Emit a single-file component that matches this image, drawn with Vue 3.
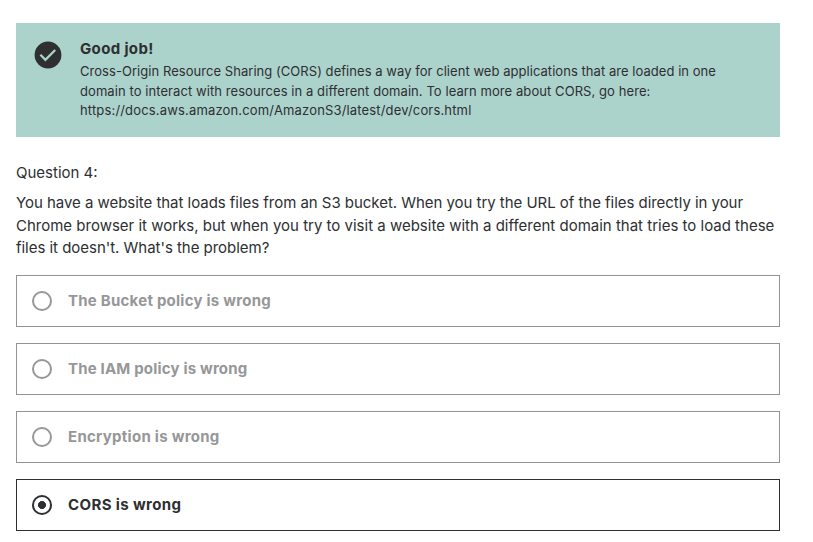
<script setup>
import { ref } from 'vue'

const explanation = [
  { text: 'Cross-Origin Resource Sharing (CORS) defines a way for client web applications that are loaded in one', spacing: 0.046 },
  { text: 'domain to interact with resources in a different domain. To learn more about CORS, go here:', spacing: 0.075 },
  { text: 'https://docs.aws.amazon.com/AmazonS3/latest/dev/cors.html', spacing: 0.163 },
]
const question = [
  { text: 'You have a website that loads files from an S3 bucket. When you try the URL of the files directly in your', spacing: -0.038 },
  { text: 'Chrome browser it works, but when you try to visit a website with a different domain that tries to load these', spacing: 0 },
  { text: "files it doesn't. What's the problem?", spacing: -0.03 },
]
const answers = [
  { text: 'The Bucket policy is wrong', spacing: 0.24 },
  { text: 'The IAM policy is wrong', spacing: 0.18 },
  { text: 'Encryption is wrong', spacing: 0.28 },
  { text: 'CORS is wrong', spacing: 0.38 },
]
const selected = ref(3)
</script>

<template>
  <main class="quiz">
    <section class="banner">
      <svg class="check" viewBox="0 0 28 28" aria-hidden="true">
        <circle cx="14" cy="14" r="13.4" fill="#2d2f31" />
        <path d="M6.4 13.8L11.4 18.8L21.2 9" fill="none" stroke="#acd2cc" stroke-width="2.3" />
      </svg>
      <div>
        <h2 class="title">Good job!</h2>
        <p class="explanation">
          <span v-for="line in explanation" :key="line.text" class="line" :style="{ letterSpacing: line.spacing + 'px' }">{{ line.text }}</span>
        </p>
      </div>
    </section>
    <p class="number">Question 4:</p>
    <p class="question">
      <span v-for="line in question" :key="line.text" class="line" :style="{ letterSpacing: line.spacing + 'px' }">{{ line.text }}</span>
    </p>
    <ul class="answers">
      <li v-for="(answer, i) in answers" :key="answer.text" class="answer" :class="{ selected: i === selected }">
        <span class="radio"></span>
        <span class="label" :style="{ letterSpacing: answer.spacing + 'px' }">{{ answer.text }}</span>
      </li>
    </ul>
  </main>
</template>

<style>
body { background: #fff; }
</style>

<style scoped>
.quiz {
  box-sizing: border-box;
  width: 796px;
  padding: 23px 16px 0;
  font-family: Inter, "Liberation Sans", sans-serif;
  color: #2d2f31;
}
h2, p, ul { margin: 0; padding: 0; }
.banner {
  box-sizing: border-box;
  display: flex;
  gap: 18px;
  height: 114px;
  padding: 16px 18px;
  background: #acd2cc;
}
.check { flex: none; width: 28px; height: 28px; margin-top: 2px; }
.title { font-size: 15px; line-height: 19px; font-weight: 700; letter-spacing: 0.35px; }
.explanation { padding-top: 4px; font-size: 13px; line-height: 19.6px; }
.line { display: block; width: max-content; white-space: nowrap; }
.number { margin-top: 25px; font-size: 15px; line-height: 22.4px; }
.question { margin-top: 8px; font-size: 15px; line-height: 22.4px; }
.answers { display: grid; gap: 16px; margin-top: 15.4px; list-style: none; }
.answer {
  box-sizing: border-box;
  display: flex;
  align-items: center;
  gap: 16px;
  height: 52px;
  padding: 0 15px;
  border: 1px solid #949495;
  color: #969798;
}
.label { font-size: 15px; font-weight: 700; line-height: 22px; }
.radio {
  box-sizing: border-box;
  width: 20px;
  height: 20px;
  border: 2px solid currentColor;
  border-radius: 50%;
}
.selected { border-color: #2d2f31; color: #2d2f31; }
.selected .radio { background: radial-gradient(circle, currentColor 3.7px, transparent 4.3px); }
</style>
